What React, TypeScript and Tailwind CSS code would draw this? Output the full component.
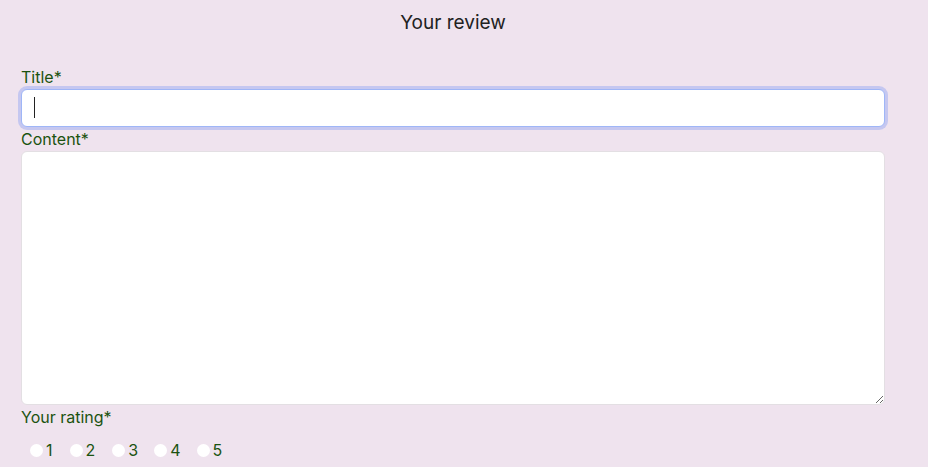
import React from "react";

export default function App() {
  const ratings = ["1", "2", "3", "4", "5"];
  return (
    <div className="min-h-[467px] w-full bg-[#efe3ee] font-['Inter',sans-serif]">
      <div className="w-[864px] ml-[21px] pt-[9px]">
        <h2 className="text-center text-[19px] leading-[28px] text-[#222222]">Your review</h2>
        <div className="mt-[28px] text-[16px] leading-[24px] text-[#1b5310]">Title*</div>
        <div className="relative">
          <input
            type="text"
            className="block w-[864px] h-[38px] rounded-[6px] border border-[#9fb6f7] bg-white px-[12px] outline-none caret-transparent shadow-[0_0_0_3px_#c5c7f0]"
          />
          <div className="absolute left-[13px] top-[8px] w-[1px] h-[21px] bg-[#222222]" />
        </div>
        <div className="text-[16px] leading-[24px] text-[#1b5310]">Content*</div>
        <textarea className="block w-[864px] h-[254px] rounded-[6px] border border-[#e3dfe3] bg-white outline-none" />
        <div className="text-[16px] leading-[24px] text-[#1b5310]">Your rating*</div>
        <div className="flex items-center pt-[13px] pl-[9px] gap-[16px]">
          {ratings.map((r, i) => (
            <label
              key={r}
              className={
                i === 1
                  ? "flex items-center text-[16px] leading-[16px] text-[#1b5310] ml-[1px]"
                  : i === 2
                  ? "flex items-center text-[16px] leading-[16px] text-[#1b5310] ml-[1px]"
                  : "flex items-center text-[16px] leading-[16px] text-[#1b5310]"
              }
            >
              <input
                type="radio"
                name="rating"
                className="appearance-none w-[13px] h-[13px] rounded-full bg-white mr-[3px]"
              />
              {r}
            </label>
          ))}
        </div>
      </div>
    </div>
  );
}
